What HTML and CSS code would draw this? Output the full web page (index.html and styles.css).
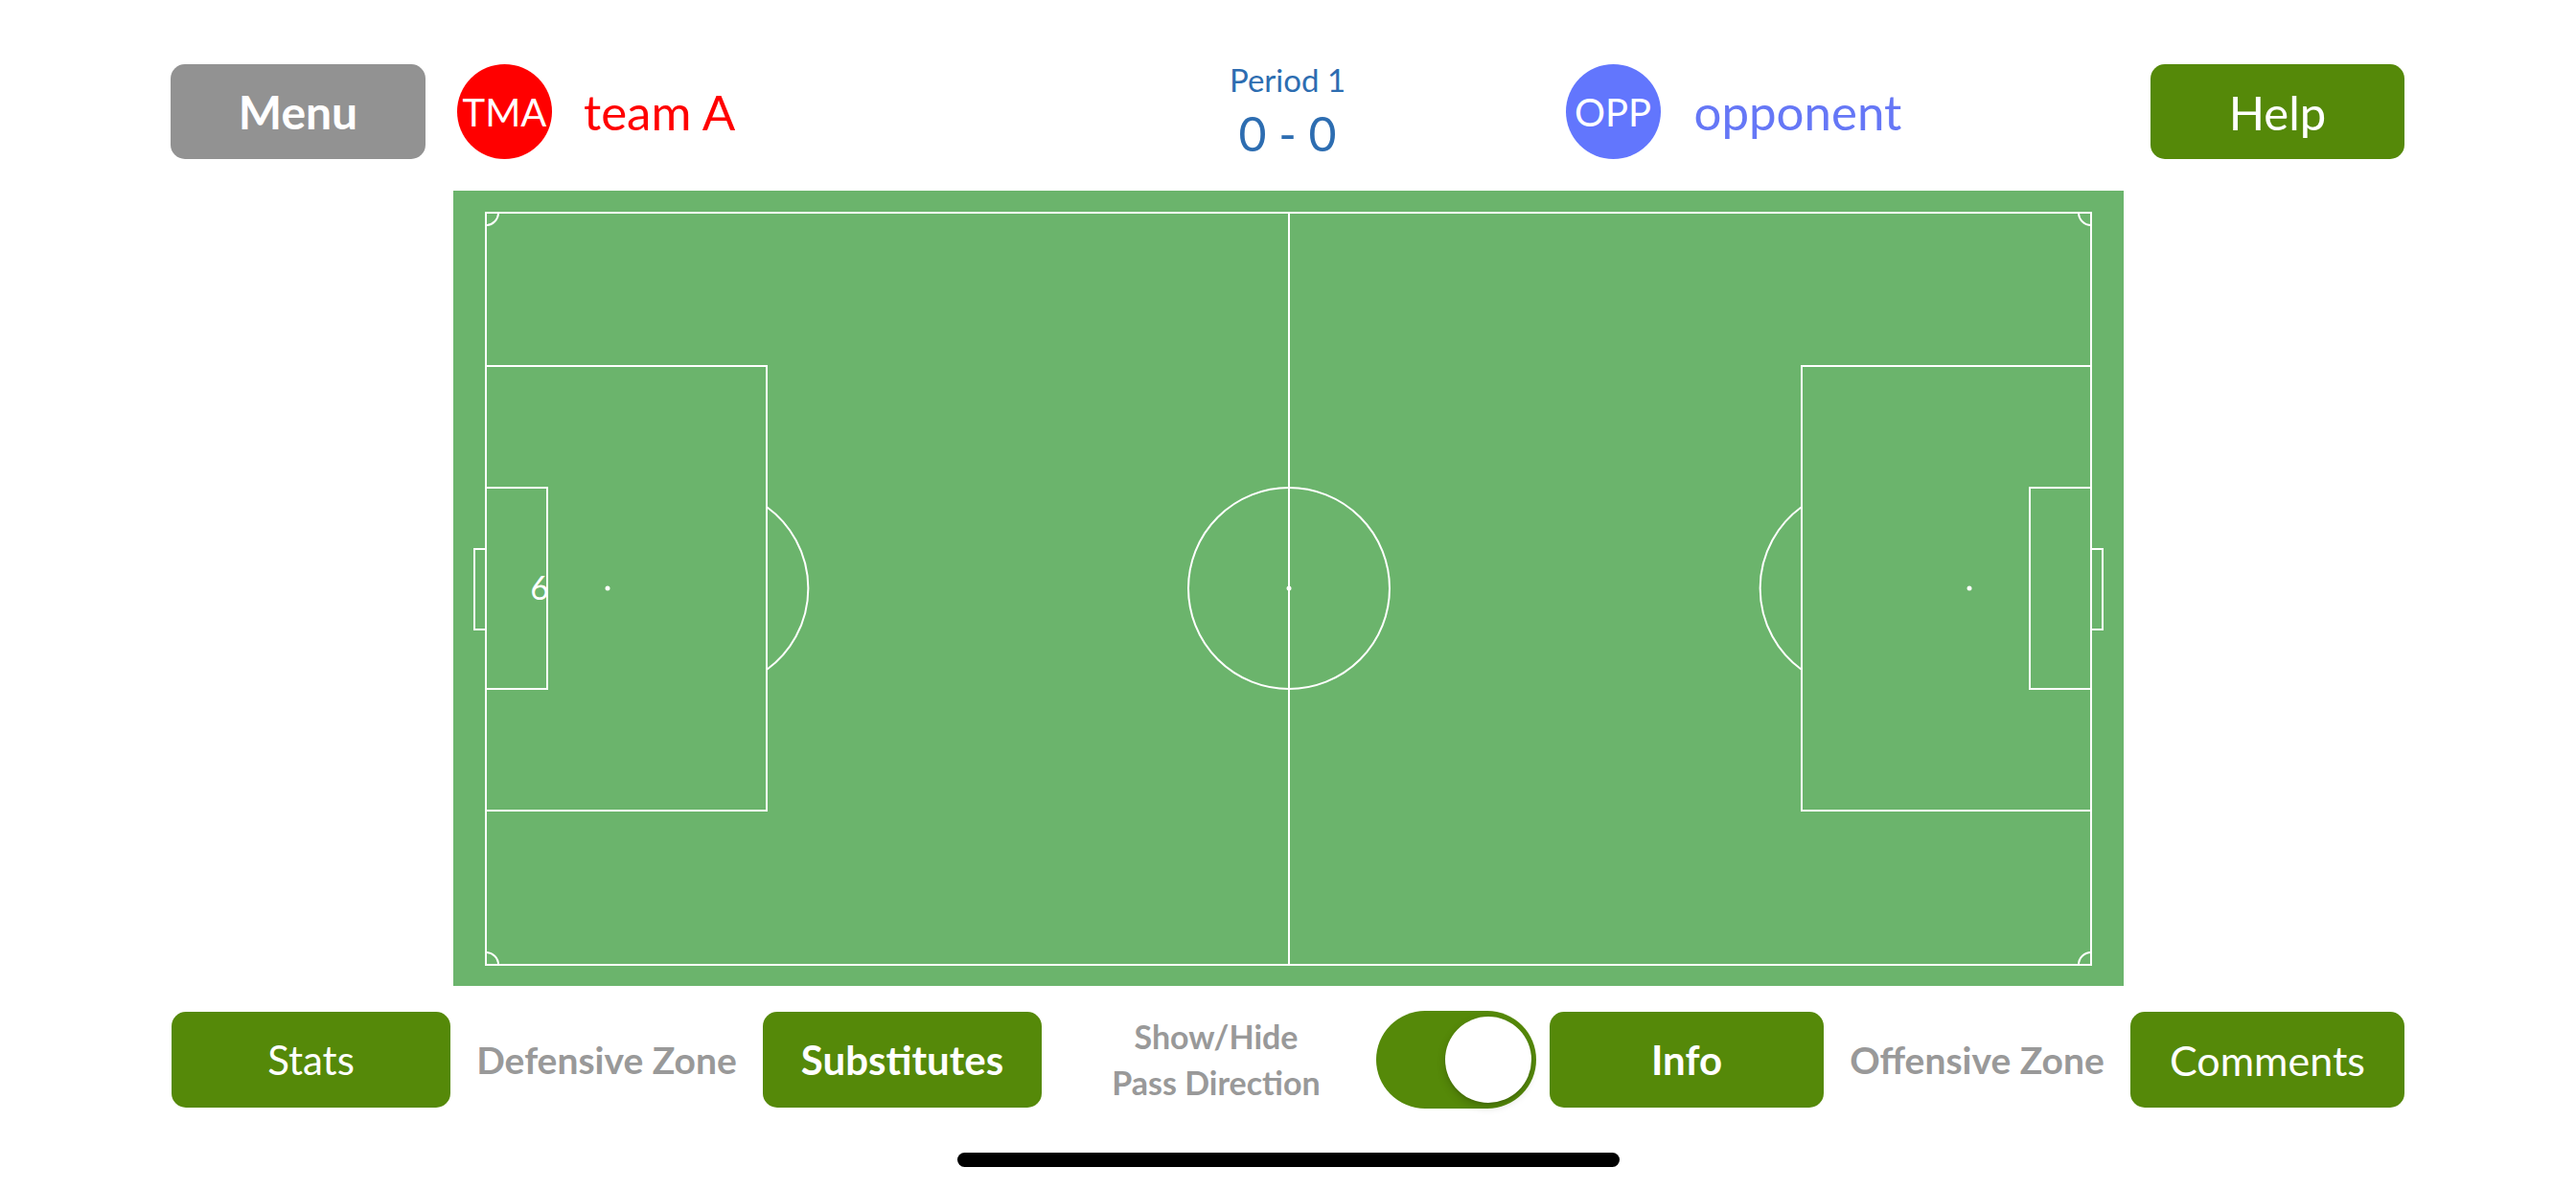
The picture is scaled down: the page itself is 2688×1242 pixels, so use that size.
FILE: index.html
```html
<!DOCTYPE html>
<html lang="en">
<head>
  <meta charset="UTF-8" />
  <meta name="viewport" content="width=device-width, initial-scale=1.0" />
  <title>Match Tracker</title>
  <link rel="stylesheet" href="styles.css">
</head>
<body>

  <header class="topbar">
    <div class="side side-home">
      <button class="btn btn-menu">Menu</button>
      <span class="badge badge-home">TMA</span>
      <span class="team-name team-home">team A</span>
    </div>

    <div class="score">
      <div class="period">Period 1</div>
      <div class="score-value">0 - 0</div>
    </div>

    <div class="side side-away">
      <span class="badge badge-away">OPP</span>
      <span class="team-name team-away">opponent</span>
      <button class="btn btn-help">Help</button>
    </div>
  </header>

  <!-- Campo -->
  <section class="pitch">
    <svg class="pitch-lines" width="1743" height="830" viewBox="0 0 1743 830">
      <g fill="none" stroke="#fff" stroke-width="2">
        <rect x="34" y="23" width="1675" height="785" />
        <line x1="872" y1="23" x2="872" y2="808" />
        <circle cx="872" cy="415" r="105" />

        <!-- lado esquerdo -->
        <rect x="34" y="183" width="293" height="464" />
        <rect x="34" y="310" width="64" height="210" />
        <rect x="22" y="374" width="12" height="84" />
        <path d="M327 330 A105 105 0 0 1 327 500" />

        <!-- lado direito -->
        <rect x="1407" y="183" width="302" height="464" />
        <rect x="1645" y="310" width="64" height="210" />
        <rect x="1709" y="374" width="12" height="84" />
        <path d="M1407 330 A105 105 0 0 0 1407 500" />

        <!-- escanteios -->
        <path d="M47 23 A13 13 0 0 1 34 36" />
        <path d="M1696 23 A13 13 0 0 0 1709 36" />
        <path d="M34 795 A13 13 0 0 1 47 808" />
        <path d="M1696 808 A13 13 0 0 1 1709 795" />
      </g>
      <g fill="#fff">
        <circle cx="872" cy="415" r="2.5" />
        <circle cx="161" cy="415" r="2.5" />
        <circle cx="1582" cy="415" r="2.5" />
      </g>
      <text class="player-number" x="100" y="427" text-anchor="end">6</text>
    </svg>
  </section>

  <section class="controls">
    <button class="btn btn-action btn-stats">Stats</button>
    <span class="zone-label zone-def">Defensive Zone</span>
    <button class="btn btn-action btn-subs">Substitutes</button>
    <span class="toggle-label">Show/Hide<br>Pass Direction</span>
    <div class="toggle">
      <div class="toggle-knob"></div>
    </div>
    <button class="btn btn-action btn-info">Info</button>
    <span class="zone-label zone-off">Offensive Zone</span>
    <button class="btn btn-action btn-comments">Comments</button>
  </section>

  <div class="home-bar"></div>

</body>
</html>
```

FILE: styles.css
```css
body {
  font-family: Lato, "Open Sans", sans-serif;
  margin: 0;
  width: 2688px;
  height: 1242px;
  overflow: hidden;
  background-color: #fff;
}

.btn {
  border: none;
  border-radius: 15px;
  color: #fff;
  font-family: inherit;
  padding: 0;
  display: flex;
  align-items: center;
  justify-content: center;
  cursor: pointer;
}

/* Topo */
.topbar {
  display: grid;
  grid-template-columns: 1fr 240px 1fr;
  grid-template-rows: 99px;
  padding: 67px 179px 0 178px;
  height: 99px;
}

.side {
  display: flex;
  align-items: center;
}

.btn-menu {
  width: 266px;
  height: 99px;
  background-color: #929292;
  font-size: 48px;
  font-weight: 700;
}

.btn-help {
  width: 265px;
  height: 99px;
  margin-left: auto;
  background-color: #558909;
  font-size: 49px;
  font-weight: 400;
}

.badge {
  width: 99px;
  height: 99px;
  border-radius: 50%;
  display: flex;
  align-items: center;
  justify-content: center;
  color: #fff;
  font-size: 40px;
  flex-shrink: 0;
}

.badge-home {
  background-color: #ff0000;
  margin-left: 33px;
}

.badge-away {
  background-color: #6276fd;
  margin-left: 170px;
}

.team-name {
  font-size: 51px;
}

.team-home {
  color: #ff0000;
  margin-left: 33px;
}

.team-away {
  color: #6577f6;
  margin-left: 35px;
}

.score {
  align-self: center;
  text-align: center;
  color: #2d6db1;
}

.period {
  font-size: 33px;
  line-height: 36px;
}

.score-value {
  font-size: 50px;
  line-height: 60px;
  margin-top: 8px;
}

/* Campo */
.pitch {
  width: 1743px;
  height: 830px;
  margin: 33px auto 0;
  background-color: #6bb46c;
}

.pitch-lines {
  display: block;
}

.player-number {
  fill: #fff;
  font-family: Lato, sans-serif;
  font-size: 34px;
}

/* Barra de baixo */
.controls {
  display: flex;
  align-items: center;
  height: 100px;
  margin-top: 27px;
  padding-left: 179px;
}

.btn-action {
  height: 100px;
  background-color: #558909;
  font-size: 42px;
  font-weight: 400;
  flex-shrink: 0;
}

.btn-stats {
  width: 291px;
}

.btn-subs {
  width: 291px;
  font-weight: 700;
}

.btn-info {
  width: 286px;
  margin-left: 14px;
  font-weight: 700;
}

.btn-comments {
  width: 286px;
  font-size: 43px;
}

.zone-label {
  color: #999;
  font-size: 39px;
  font-weight: 700;
  text-align: center;
  flex-shrink: 0;
}

.zone-def {
  width: 326px;
}

.zone-off {
  width: 320px;
}

.toggle-label {
  width: 349px;
  box-sizing: border-box;
  padding-left: 15px;
  color: #999;
  font-size: 34px;
  font-weight: 700;
  line-height: 48px;
  text-align: center;
  flex-shrink: 0;
}

.toggle {
  width: 167px;
  height: 102px;
  box-sizing: border-box;
  border-radius: 51px;
  background-color: #558909;
  display: flex;
  align-items: center;
  justify-content: flex-end;
  padding-right: 5px;
  flex-shrink: 0;
}

.toggle-knob {
  width: 90px;
  height: 90px;
  border-radius: 50%;
  background-color: #fff;
  box-shadow: 0 4px 10px rgba(0, 0, 0, 0.18), 0 2px 2px rgba(0, 0, 0, 0.08);
}

.home-bar {
  width: 691px;
  height: 15px;
  border-radius: 8px;
  background-color: #000;
  margin: 47px auto 0;
}
```
